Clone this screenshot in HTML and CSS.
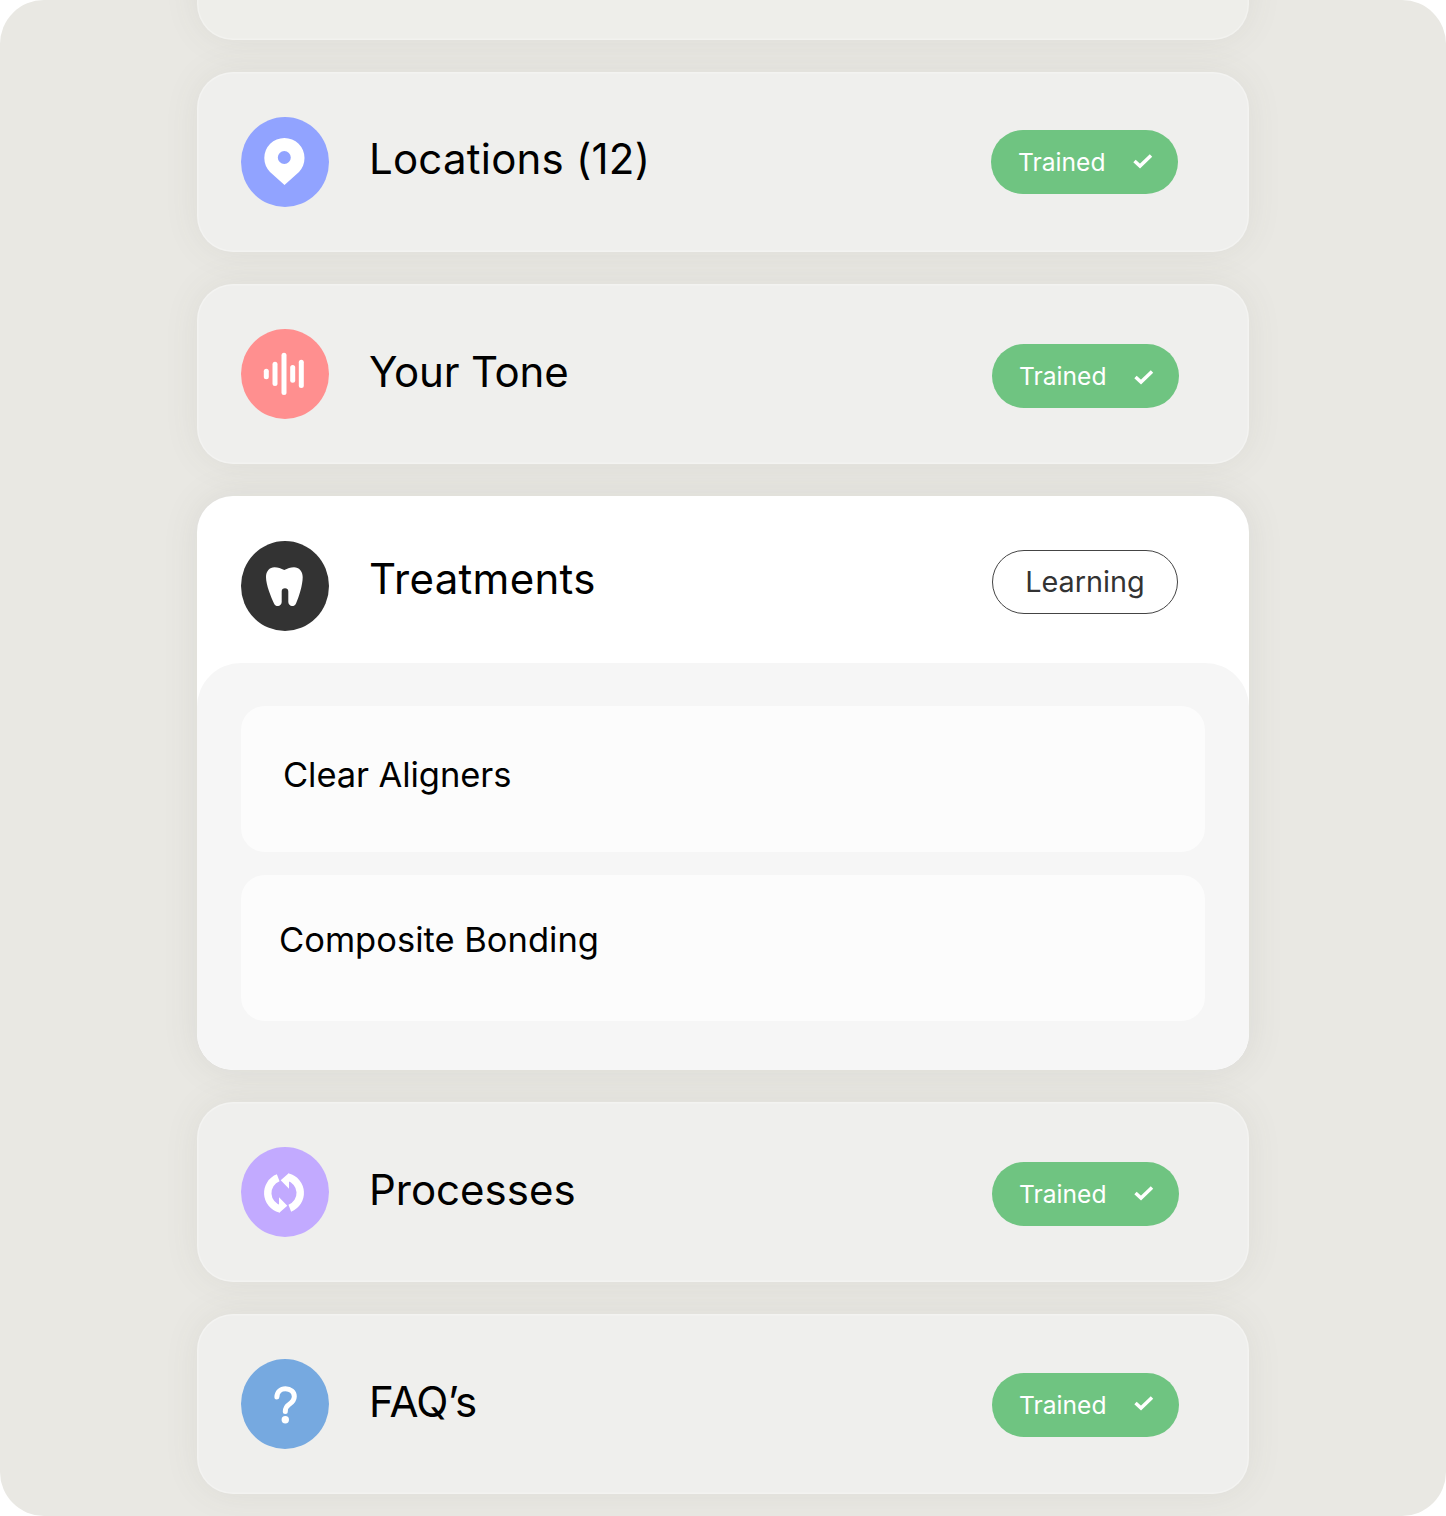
FILE: index.html
```html
<!DOCTYPE html>
<html lang="en">
<head>
<meta charset="utf-8">
<title>Training status</title>
<link rel="stylesheet" href="styles.css">
</head>
<body>
<main class="stage">
  <section class="card card-cut"></section>

  <section class="card">
    <div class="row">
      <span class="icon icon-blue">
        <svg viewBox="0 0 88 90"><path fill="#fff" fill-rule="evenodd" d="M43.5 68 29 55C25.5 51.5 23.3 46.5 23.3 41a20 20 0 0 1 40.2 0c0 5.500-2 10.500-5.500 14ZM43.300 34a6.500 6.500 0 1 0 0 13 6.500 6.500 0 0 0 0-13Z"/></svg>
      </span>
      <h2 class="title t-a">Locations (12)</h2>
      <div class="pill pill-a">Trained
        <svg class="check" viewBox="0 0 20 16"><path d="M1.500 8 7 13 18 2.500"/></svg>
      </div>
    </div>
  </section>

  <section class="card">
    <div class="row">
      <span class="icon icon-red">
        <svg viewBox="0 0 88 90"><g class="bars"><path d="M25.300 42.200v5.600"/><path d="M34 35.200v19.300"/><path d="M43 26.200v37.300"/><path d="M51.700 38.500v12.700"/><path d="M60.300 33.200v23.300"/></g></svg>
      </span>
      <h2 class="title t-b t-d">Your Tone</h2>
      <div class="pill pill-b">Trained
        <svg class="check check-low" viewBox="0 0 20 16"><path d="M1.500 8 7 13 18 2.500"/></svg>
      </div>
    </div>
  </section>

  <section class="card card-open">
    <div class="row">
      <span class="icon icon-dark">
        <svg viewBox="0 0 88 90"><path fill="#fff" d="M43.300 29C40 27.500 37 26.300 33.500 26.300 28.500 26.300 25 30.500 25 36c0 8 5 20 8 26.500 1 2.300 3 2.800 4.300 2.500 2.300-.4 3.200-2 3.400-4V50.500c0-2 1.300-3.200 3.300-3.200s3.300 1.200 3.300 3.200V61c.2 2 1.200 3.600 3.400 4 1.300.3 3.300-.2 4.300-2.500 3-6.500 6.700-18.500 6.700-26.500 0-5.500-3.700-9.700-8.700-9.700-3.500 0-6.500 1.200-9.700 2.700Z"/></svg>
      </span>
      <h2 class="title t-c">Treatments</h2>
      <div class="pill pill-outline">Learning</div>
    </div>
    <div class="panel">
      <div class="sub"><p class="sub-text sub-a">Clear Aligners</p></div>
      <div class="sub"><p class="sub-text sub-b">Composite Bonding</p></div>
    </div>
  </section>

  <section class="card">
    <div class="row">
      <span class="icon icon-purple">
        <svg viewBox="0 0 88 90"><path class="sync" d="M47 30.200A16.300 16.300 0 0 1 48.800 61.200"/><path class="sync" d="M39 61.800A16.300 16.300 0 0 1 37.200 30.800"/><path fill="#fff" d="M39.700 33.300 48 26V41.700ZM46.300 58.700 38 66V50.300Z"/></svg>
      </span>
      <h2 class="title t-b">Processes</h2>
      <div class="pill pill-b">Trained
        <svg class="check" viewBox="0 0 20 16"><path d="M1.500 8 7 13 18 2.500"/></svg>
      </div>
    </div>
  </section>

  <section class="card">
    <div class="row">
      <span class="icon icon-sky">
        <svg viewBox="0 0 88 90"><path class="ask" d="M35.900 38C36 33 39.500 29.800 44.500 29.800 49.500 29.800 53.300 33 53.300 37.500 53.300 41.500 51 43.500 48 45.500 45.500 47.200 44.300 48.500 44.300 52.500"/><circle cx="44.300" cy="60.700" r="3.700" fill="#fff"/></svg>
      </span>
      <h2 class="title t-b t-e">FAQ’s</h2>
      <div class="pill pill-e">Trained
        <svg class="check check-high" viewBox="0 0 20 16"><path d="M1.500 8 7 13 18 2.500"/></svg>
      </div>
    </div>
  </section>
</main>
</body>
</html>
```

FILE: styles.css
```css
* { box-sizing: border-box; }

html, body { margin: 0; background: #fff; }

.stage {
  width: 1446px;
  height: 1516px;
  display: flex;
  flex-direction: column;
  justify-content: flex-end;
  align-items: center;
  gap: 32px;
  padding-bottom: 22px;
  border-radius: 44px;
  background: #e9e8e3;
  overflow: hidden;
  font-family: Inter, "Liberation Sans", sans-serif;
}

.card {
  flex: none;
  width: 1052px;
  height: 180px;
  border-radius: 36px;
  background: #efefed;
  box-shadow: 0 0 36px rgba(90, 88, 78, .08), inset 0 0 0 1.500px rgba(255, 255, 255, .25);
}

.card-cut { background: #eeeeea; }

.card-open {
  height: 574px;
  background: #fff;
  overflow: hidden;
  box-shadow: 0 0 36px rgba(90, 88, 78, .1);
}

.row {
  display: flex;
  align-items: flex-start;
  padding: 45px 70px 0 44px;
}

.icon {
  flex: none;
  width: 88px;
  height: 90px;
  border-radius: 50%;
}

.icon svg { display: block; width: 88px; height: 90px; }

.icon-blue { background: #91a3ff; }
.icon-red { background: #ff8f8f; }
.icon-dark { background: #333; }
.icon-purple { background: #c2aaff; }
.icon-sky { background: #76a9e0; }

.bars path, .ask {
  fill: none;
  stroke: #fff;
  stroke-width: 5px;
  stroke-linecap: round;
}

.sync { fill: none; stroke: #fff; stroke-width: 7.400px; }

.title {
  margin: 0 0 0 40px;
  font-size: 42px;
  line-height: 52px;
  font-weight: 400;
  color: #000;
}

.t-a { margin-top: 16px; letter-spacing: .22px; }
.t-b { margin-top: 17px; }
.t-c { margin-top: 12px; letter-spacing: .3px; }
.t-d { letter-spacing: -.2px; }
.t-e { letter-spacing: -.6px; }

.pill {
  display: flex;
  align-items: center;
  width: 187px;
  height: 64px;
  margin-left: auto;
  padding-left: 27px;
  border-radius: 32px;
  font-size: 24.600px;
  white-space: nowrap;
  color: #fff;
  background: #6fc481;
}

.pill-a { margin-top: 13px; margin-right: 1px; }
.pill-b { margin-top: 15px; }
.pill-e { margin-top: 14px; }

.pill-outline {
  width: 186px;
  margin-top: 9px;
  margin-right: 1px;
  justify-content: center;
  padding: 0 0 2px;
  font-size: 28.800px;
  color: #333;
  background: #fff;
  border: 1.500px solid #444;
}

.check {
  width: 20px;
  height: 16px;
  margin: -2px 0 0 27.500px;
  fill: none;
  stroke: #fff;
  stroke-width: 3.500px;
}

.check-low { margin-top: 1px; }
.check-high { margin-top: -4px; }

.panel {
  display: flex;
  flex-direction: column;
  gap: 23.500px;
  height: 407px;
  margin-top: 32px;
  padding: 43px 44px 0;
  border-radius: 44px 44px 36px 36px;
  background: #f6f6f6;
}

.sub {
  height: 145.500px;
  border-radius: 24px;
  background: #fcfcfc;
}

.sub-text {
  margin: 0;
  font-size: 34.500px;
  line-height: 44px;
  color: #000;
}

.sub-a { padding: 47px 0 0 42px; letter-spacing: -.08px; }
.sub-b { padding: 42.500px 0 0 38px; }
```
